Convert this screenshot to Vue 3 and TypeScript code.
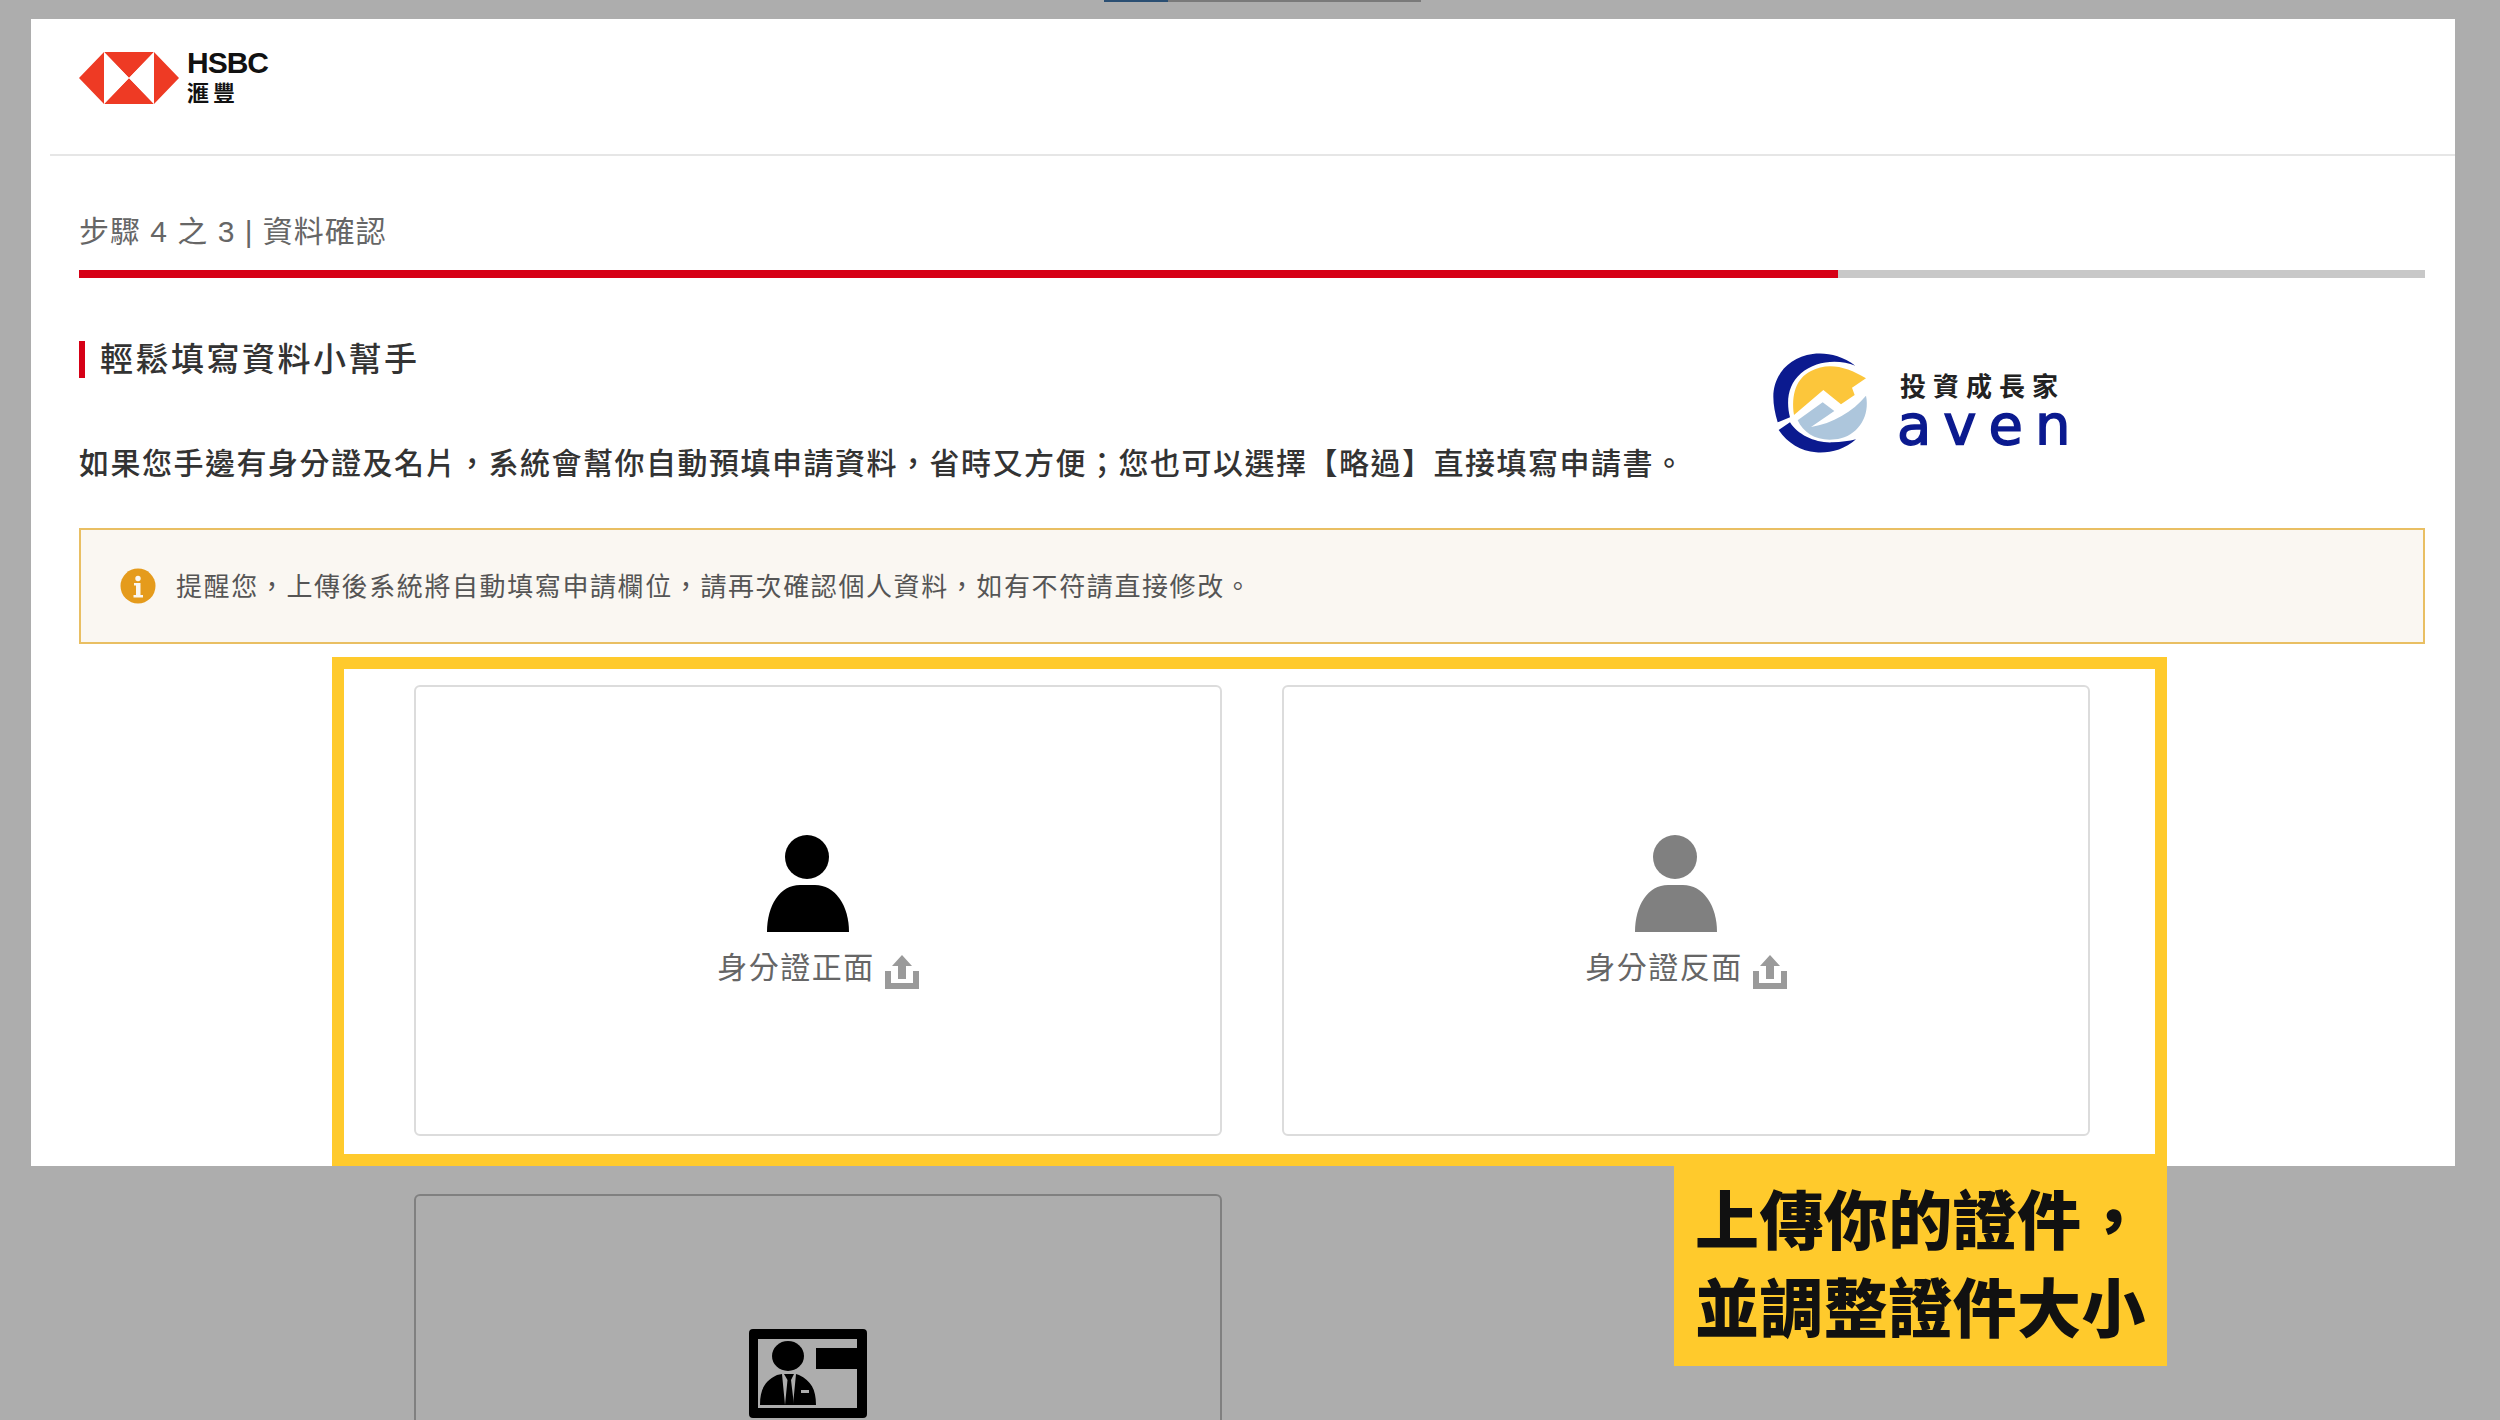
<script setup lang="ts">
const cards = [
  { label: "身分證正面", tone: "dark" },
  { label: "身分證反面", tone: "grey" },
]
</script>

<template>
  <div class="page">
    <div class="strip"><span class="strip-fill"></span></div>

    <main class="panel">
      <header class="top">
        <svg class="hsbc-mark" viewBox="0 0 100 52" width="100" height="52">
          <path fill="#ee3a24" d="M0 26 25 0V52ZM100 26 75 52V0ZM25 0H75L50 26ZM25 52H75L50 26Z" />
          <path fill="#fff" d="M25 0 50 26 25 52ZM75 0V52L50 26Z" />
        </svg>
        <div class="hsbc-name">
          <strong>HSBC</strong>
          <span>滙豐</span>
        </div>
      </header>

      <section class="content">
        <div class="step">步驟 4 之 3 | 資料確認</div>
        <div class="progress"><div class="progress-fill"></div></div>

        <div class="intro">
          <h2 class="title">輕鬆填寫資料小幫手</h2>
          <p class="lead">如果您手邊有身分證及名片，系統會幫你自動預填申請資料，省時又方便；您也可以選擇【略過】直接填寫申請書。</p>

          <div class="aven">
            <svg viewBox="0 0 330 345" width="110" height="115">
              <path fill="#0b1a8f" d="M268 62C225 30 180 22 140 27 70 35 22 90 22 155 22 180 27 205 35 232L72 217C60 170 65 120 105 85 150 45 220 42 268 62Z" />
              <path fill="#0b1a8f" d="M38 255 72 232C95 270 150 295 200 292 225 291 250 288 270 283 235 315 190 325 150 322 105 318 65 295 38 255Z" />
              <path fill="#fcc63b" d="M84 210C75 150 90 100 135 78 185 50 245 65 300 100L258 128 266 150 225 178 172 135Z" />
              <path fill="#adc6dc" d="M95 226 170 172 205 198 135 246C200 235 260 200 300 152 312 210 280 265 225 280 165 295 115 270 95 226Z" />
            </svg>
            <div class="aven-text">
              <span class="aven-zh">投資成長家</span>
              <span class="aven-en">aven</span>
            </div>
          </div>
        </div>

        <div class="notice">
          <svg class="notice-icon" viewBox="0 0 36 36" width="36" height="36">
            <circle cx="18" cy="18" r="17.5" fill="#e59b1c" />
            <circle cx="18" cy="10.5" r="2.7" fill="#faf7f2" />
            <path fill="#faf7f2" d="M14 15h6.5v12H23v2.500H13.500V27H16V17.500h-2Z" />
          </svg>
          <span class="notice-text">提醒您，上傳後系統將自動填寫申請欄位，請再次確認個人資料，如有不符請直接修改。</span>
        </div>

        <div class="frame">
          <div v-for="card in cards" :key="card.label" class="card" :class="card.tone">
            <svg class="person" viewBox="0 0 84 98" width="84" height="98">
              <circle cx="41" cy="22" r="22" />
              <path d="M1 97C1 70 14 50 34 50H49C69 50 83 70 83 97Z" />
            </svg>
            <div class="card-label">
              <span>{{ card.label }}</span>
              <svg viewBox="0 0 34 34" width="34" height="34">
                <path fill="#9a9a9a" d="M17 0 27 11H21V24H13V11H7ZM0 16H6V28H28V16H34V34H0Z" />
              </svg>
            </div>
          </div>
        </div>
      </section>
    </main>

    <div class="below">
      <div class="card-ghost">
        <svg class="id-icon" viewBox="0 0 118 89" width="118" height="89">
          <path fill-rule="evenodd" d="M4 0H114a4 4 0 0 1 4 4V85a4 4 0 0 1-4 4H4a4 4 0 0 1-4-4V4a4 4 0 0 1 4-4ZM9 10V79H108V10Z" />
          <ellipse cx="39" cy="27" rx="16" ry="15" />
          <rect x="67" y="19" width="41" height="21" />
          <path d="M11 76C11 60 16 52 28 46L33 45 36 76ZM44 76 47 45 50 46C62 52 67 60 67 76Z" />
          <path d="M35 45H45L42 51 45 76H36L38.500 51Z" />
          <rect x="52" y="61" width="8" height="3" fill="#adadad" />
        </svg>
      </div>
    </div>

    <div class="callout">上傳你的證件，<br />並調整證件大小</div>
  </div>
</template>

<style>
html,
body {
  margin: 0;
  background: #adadad;
}
</style>

<style scoped>
.page {
  position: relative;
  height: 1420px;
  overflow: hidden;
  background: #adadad;
  font-family: "Liberation Sans", "Noto Sans CJK TC", sans-serif;
}

.strip {
  width: 317px;
  height: 2px;
  margin-left: 1104px;
  margin-bottom: 17px;
  background: #7a7a7a;
}
.strip-fill {
  display: block;
  width: 64px;
  height: 2px;
  background: #2b4f73;
}

.panel {
  width: 2424px;
  height: 1147px;
  margin-left: 31px;
  background: #fff;
  box-sizing: border-box;
}

.top {
  display: flex;
  gap: 8px;
  height: 137px;
  margin-left: 19px;
  padding: 33px 0 0 29px;
  box-sizing: border-box;
  border-bottom: 2px solid #e6e6e6;
}
.hsbc-name {
  display: flex;
  flex-direction: column;
  color: #111;
}
.hsbc-name strong {
  font-size: 30px;
  line-height: 22px;
  letter-spacing: -1px;
}
.hsbc-name span {
  margin-top: 8px;
  font-size: 22px;
  line-height: 24px;
  font-weight: 700;
  letter-spacing: 4px;
}

.content {
  width: 2346px;
  margin-left: 48px;
}

.step {
  margin-top: 56px;
  font-size: 30px;
  line-height: 40px;
  letter-spacing: 1px;
  color: #666;
}
.progress {
  height: 8px;
  margin-top: 18px;
  background: #c8c8c8;
}
.progress-fill {
  width: 1759px;
  height: 100%;
  background: #d60016;
}

.intro {
  position: relative;
}
.title {
  margin: 63px 0 0;
  padding-left: 15px;
  border-left: 6px solid #d60016;
  font-size: 33px;
  line-height: 37px;
  font-weight: 500;
  letter-spacing: 2.500px;
  color: #333;
}
.lead {
  margin: 66px 0 0;
  font-size: 30px;
  line-height: 40px;
  font-weight: 500;
  letter-spacing: 1.500px;
  color: #333;
}

.aven {
  position: absolute;
  top: 4px;
  left: 1687px;
  display: flex;
  align-items: flex-start;
  gap: 24px;
}
.aven-text {
  display: flex;
  flex-direction: column;
  align-items: flex-start;
  padding-top: 27px;
}
.aven-zh {
  font-size: 26px;
  line-height: 30px;
  font-weight: 700;
  letter-spacing: 7px;
  color: #222;
}
.aven-en {
  margin-left: -3px;
  font-family: "DejaVu Sans", sans-serif;
  font-size: 56px;
  line-height: 46px;
  letter-spacing: 12px;
  color: #0b1a8f;
  -webkit-text-stroke: 1.500px #0b1a8f;
}

.notice {
  display: flex;
  align-items: center;
  gap: 20px;
  height: 116px;
  margin-top: 44px;
  padding-left: 39px;
  box-sizing: border-box;
  border: 2px solid #e9bf63;
  background: #faf7f2;
  font-size: 26px;
  letter-spacing: 1.600px;
  color: #555;
}
.notice-text {
  margin-bottom: 3px;
}

.frame {
  display: flex;
  gap: 60px;
  width: 1835px;
  height: 509px;
  margin: 13px 0 0 253px;
  padding: 16px 0 0 70px;
  box-sizing: border-box;
  border: 12px solid #ffca2c;
}

.card,
.card-ghost {
  width: 808px;
  box-sizing: border-box;
  border-radius: 6px;
}
.card {
  display: flex;
  flex-direction: column;
  align-items: center;
  height: 451px;
  padding-top: 148px;
  border: 2px solid #dcdcdc;
}
.person {
  margin-right: 20px;
}
.card.dark .person {
  fill: #000;
}
.card.grey .person {
  fill: #808080;
}
.card-label {
  display: flex;
  align-items: center;
  gap: 10px;
  margin-top: 18px;
  font-size: 30px;
  line-height: 34px;
  letter-spacing: 1.500px;
  color: #666;
}
.card-label span {
  margin-bottom: 8px;
}

.below {
  margin: 28px 0 0 414px;
}
.card-ghost {
  height: 400px;
  padding: 133px 0 0 333px;
  border: 2px solid #808080;
}
.id-icon {
  display: block;
}

.callout {
  position: absolute;
  top: 1154px;
  left: 1674px;
  width: 493px;
  height: 212px;
  padding: 24px 0 0 21px;
  box-sizing: border-box;
  background: #ffca2c;
  font-size: 64px;
  line-height: 88px;
  font-weight: 900;
  letter-spacing: 0.400px;
  color: #111;
  white-space: nowrap;
}
</style>
